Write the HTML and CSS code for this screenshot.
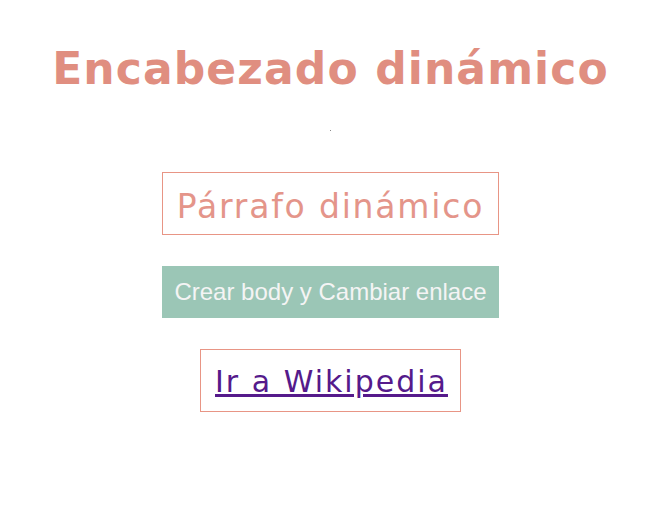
FILE: index.html
```
<!DOCTYPE html>
<html lang="es">
<head>
<meta charset="utf-8">
<title>Encabezado dinámico</title>
<link rel="stylesheet" href="styles.css">
</head>
<body>
<main class="page">
  <h1 class="title">Encabezado dinámico</h1>
  <span class="dot"></span>
  <p class="para">Párrafo dinámico</p>
  <button class="btn">Crear body y Cambiar enlace</button>
  <div class="linkbox"><a class="link" href="#">Ir a Wikipedia</a></div>
</main>
</body>
</html>
```
FILE: styles.css
```
html, body {
  margin: 0;
  padding: 0;
  background: #ffffff;
}
.page {
  display: flex;
  flex-direction: column;
  align-items: center;
  width: 661px;
}
.title {
  margin: 43px 0 0 0;
  font-family: "DejaVu Sans", sans-serif;
  font-weight: 700;
  font-size: 44px;
  line-height: 52px;
  letter-spacing: 1.1px;
  color: #e08e80;
  text-align: center;
}
.dot {
  display: block;
  width: 1px;
  height: 1px;
  background: #8a8a8a;
  margin: 35px 0 0 0;
}
.para {
  box-sizing: border-box;
  width: 337px;
  margin: 41px 0 0 0;
  padding: 15px 0 9px 0;
  border: 1px solid #e89585;
  font-family: "DejaVu Sans", sans-serif;
  font-size: 33px;
  line-height: 37px;
  letter-spacing: 1.8px;
  color: #e4958a;
  text-align: center;
}
.btn {
  box-sizing: border-box;
  width: 337px;
  height: 52px;
  margin: 31px 0 0 0;
  padding: 0;
  border: none;
  background: #9bc6b6;
  font-family: "Liberation Sans", Arial, sans-serif;
  font-size: 24px;
  color: #f4f4f4;
}
.linkbox {
  box-sizing: border-box;
  margin: 31px 0 0 0;
  padding: 13px 12px 11px 14px;
  border: 1px solid #e89585;
}
.link {
  font-family: "DejaVu Sans", sans-serif;
  font-size: 30px;
  line-height: 37px;
  letter-spacing: 2px;
  color: #551a8b;
  text-decoration: underline;
  text-decoration-thickness: 3px;
}
```
